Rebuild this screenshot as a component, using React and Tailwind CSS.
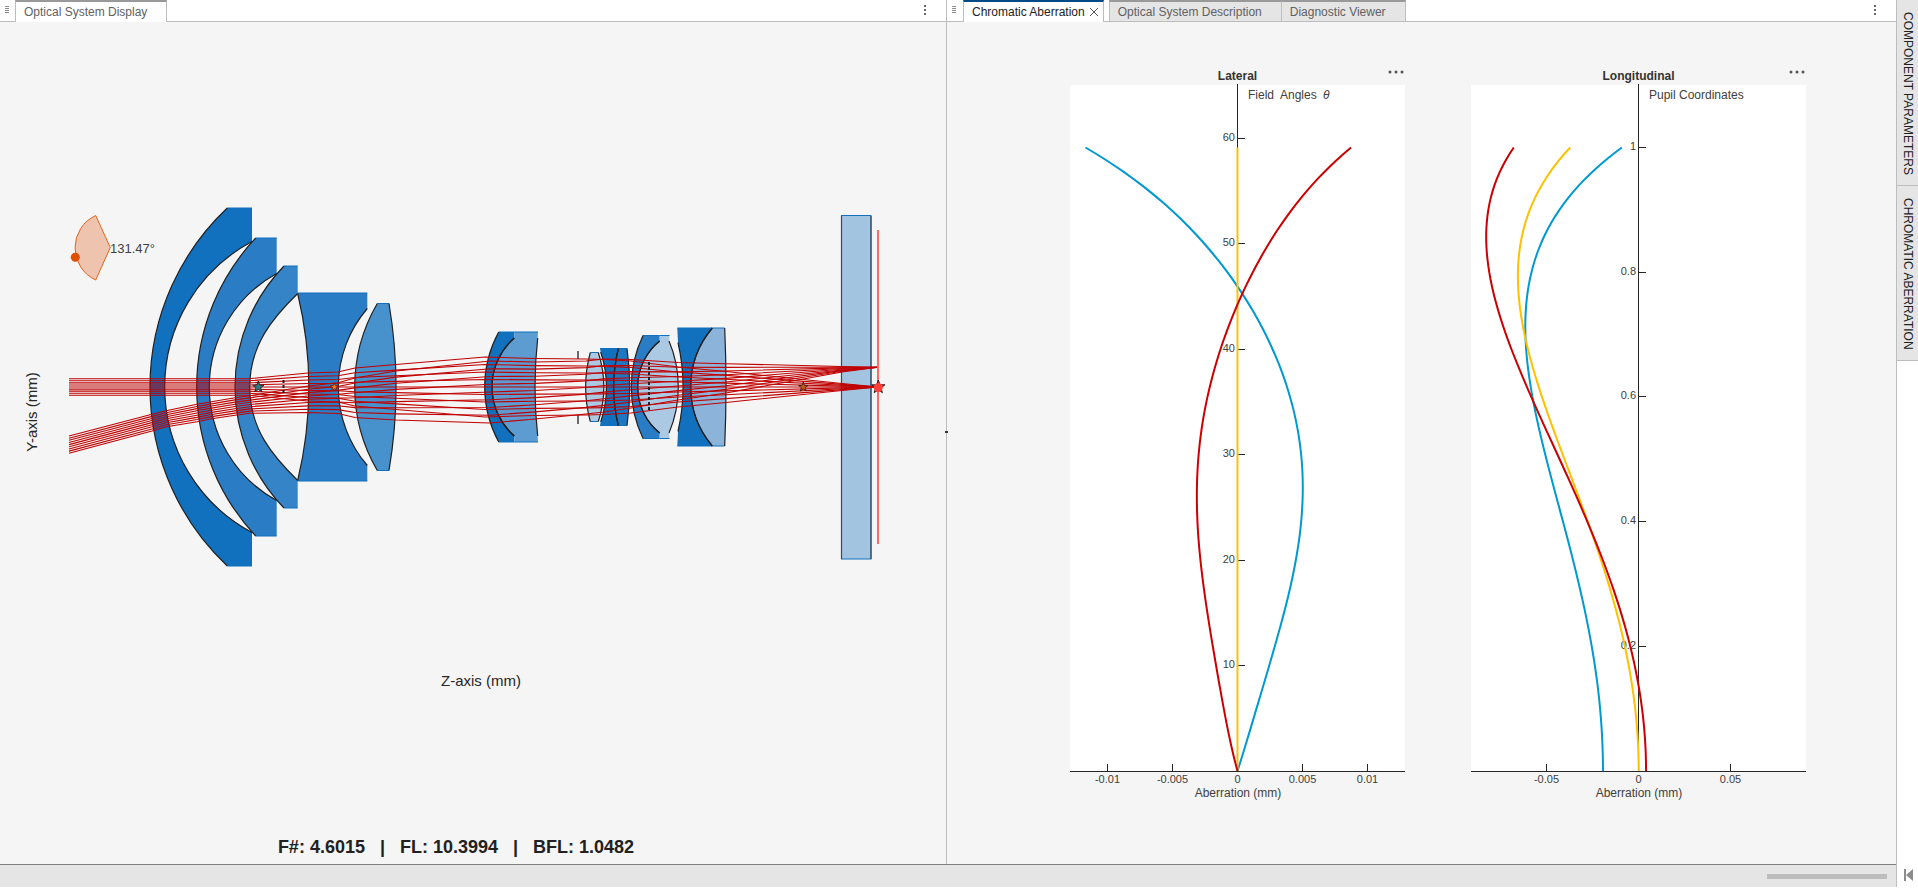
import React from 'react';

// optical axis of the lens drawing
const AXIS_Y = 387;

// A surface is [vertex x, edge x, half height]; xl/xr/h give the outer box of the element.
const LENSES = [
  { fill: '#1171be', left: [150, 227.3, 179], right: [164.7, 252, 145.5], xl: 227.3, xr: 252, h: 179 },
  { fill: '#2a7dc5', left: [196.7, 255.7, 149], right: [209.3, 276.7, 113.5], xl: 255.7, xr: 276.7, h: 149 },
  { fill: '#3584c7', left: [235, 284, 121], right: [249.7, 297.7, 93.5, 'asphere'], xl: 284, xr: 297.7, h: 121 },
  { fill: '#2a7dc5', left: [308.7, 297.7, 93.5], right: [338.3, 367.3, 78.5], xl: 297.7, xr: 367.3, h: 94 },
  { fill: '#4791cc', left: [354.7, 377.3, 83.5], right: [396, 389, 83.5], xl: 377.3, xr: 389, h: 83.5 },
  { fill: '#1171be', left: [484.7, 498.7, 55], right: [492, 514.3, 49], xl: 498.7, xr: 514.3, h: 55 },
  { fill: '#5d9cd1', left: [492, 514.3, 49], right: [535, 537.7, 49], xl: 514.3, xr: 538, h: 55 },
  { fill: '#abc9e3', left: [585.7, 590.3, 34.5], right: [603.7, 598.3, 34.5], xl: 590.3, xr: 598.3, h: 34.5 },
  { fill: '#1171be', left: [606.3, 600.7, 35], right: [613.7, 618.3, 38.5], xl: 600, xr: 618.3, h: 38.5 },
  { fill: '#1f77c2', left: [613.7, 618.3, 38.5], right: [629.7, 627, 38.5], xl: 618.3, xr: 627.3, h: 38.5 },
  { fill: '#2a7dc5', left: [631.3, 643, 51.5], right: [637.7, 659.7, 46], xl: 643, xr: 659.7, h: 51.5 },
  { fill: '#abc9e3', left: [637.7, 659.7, 46], right: [678.3, 669, 46], xl: 659.7, xr: 669.5, h: 51.5 },
  { fill: '#1171be', left: [683, 678, 44.5], right: [690.7, 712.3, 59], xl: 677.3, xr: 712.3, h: 59 },
  { fill: '#8cb4da', left: [690.7, 712.3, 59], right: [726, 724.7, 59], xl: 712.3, xr: 724.7, h: 59 },
];

// top and bottom ray of each bundle at every surface: [x, y top, y bottom]
const BUNDLES = [
  [
    [69, 378.7, 395.3], [249, 378.7, 395.3], [308, 373, 401], [338, 372, 402], [355, 368, 406],
    [396, 364.5, 409.5], [485, 357, 417], [535, 358.5, 415.5], [586, 359, 415], [604, 359.5, 414.5],
    [631, 361, 413], [678, 367, 407], [726, 371.5, 402.5], [842, 383.5, 390.5], [878, 387, 387],
  ],
  [
    [69, 436, 453.3], [152, 414.3, 431], [165, 411, 427], [197, 404.3, 421.7], [210, 402, 419],
    [235, 397.7, 415.3], [250, 395.7, 413.3], [308, 386, 412.5], [338, 382.7, 413.5], [355, 378, 417.5],
    [396, 371, 420], [490, 361, 423], [535, 362, 419], [586, 361, 414], [604, 359, 412],
    [631, 359.5, 408], [678, 362.5, 400], [726, 363.7, 393], [842, 366.5, 372], [878, 367.3, 367.3],
  ],
];
const RAYS_PER_BUNDLE = 9;

const TICK = '#262626';
const RED = '#cc0000';
const BLUE = '#0099d1';
const YELLOW = '#ffc000';

// plot rows of full field / full pupil and of zero
const CURVE_TOP = 63.5;
const CURVE_BOTTOM = 687;

// `powers` are the terms of the polynomial that is fitted through the samples
const CHARTS = [
  {
    title: 'Lateral',
    yLabel: 'Field  Angles ',
    symbol: 'θ',
    base: 167.5,
    powers: [1, 2, 3, 4, 5, 6],
    xTicks: [[37.5, '-0.01'], [102.5, '-0.005'], [167.5, '0'], [232.5, '0.005'], [297.5, '0.01']],
    yTicks: [[54.5, '60'], [159.5, '50'], [265.5, '40'], [370.5, '30'], [476.5, '20'], [581.5, '10']],
    lines: [
      { color: BLUE, points: [[15.7, 63.5], [51, 86.5], [86.7, 112.7], [126.7, 151], [167.5, 203.7], [203.3, 266], [223.3, 324.3], [231.7, 376], [232.7, 402], [226, 472.7], [206.7, 557.7], [186.7, 622.7], [167.5, 687]] },
      { color: YELLOW, points: [[167.5, 63.5], [167.5, 687]] },
      { color: RED, points: [[281, 63.5], [235, 109.3], [211.7, 139.3], [190, 176], [171.7, 209.3], [151.7, 262.7], [136.7, 317], [128, 376], [126.7, 409], [130, 469.3], [140, 546], [150.7, 607.7], [167.5, 687]] },
    ],
  },
  {
    title: 'Longitudinal',
    yLabel: 'Pupil Coordinates',
    base: 0,
    powers: [0, 2, 4, 6, 8],
    xTicks: [[75.5, '-0.05'], [167.5, '0'], [259.5, '0.05']],
    yTicks: [[63.5, '1'], [188.5, '0.8'], [312.5, '0.6'], [437.5, '0.4'], [562.5, '0.2']],
    lines: [
      { color: BLUE, points: [[150.3, 63.7], [122.3, 87.7], [92.3, 119.3], [72.3, 154.3], [59.7, 192.7], [54.3, 239.3], [57.3, 286], [64.5, 329.3], [75.7, 376], [86, 416], [99, 464.3], [112.3, 519.3], [122.3, 569.3], [128.5, 619.3], [131.3, 656], [131.7, 687]] },
      { color: YELLOW, points: [[99, 63.7], [69, 104.3], [52.3, 146], [47, 189.3], [53.7, 252.7], [70.7, 311], [94.3, 376], [108, 416], [116, 437.3], [129, 471], [142.3, 516], [153, 557.7], [160.7, 599.3], [165.7, 639.3], [167.5, 687]] },
      { color: RED, points: [[42.7, 63.7], [22.3, 104.3], [15.3, 152.7], [21.7, 206], [37.3, 256], [60.7, 314.3], [89, 376], [106, 416], [116.7, 437.3], [132.3, 476], [149, 524.3], [159, 562.7], [167.7, 602.7], [172.7, 639.3], [175, 687]] },
    ],
  },
];

function arcTo([vertex, edge, half, kind], down) {
  const end = AXIS_Y + (down ? half : -half);
  if (kind === 'asphere') {
    const s = down ? -1 : 1;
    const cx = edge - (edge - vertex) * 0.52;
    return `C ${cx} ${AXIS_Y + s * half * 0.74} ${vertex} ${AXIS_Y + s * half * 0.45} ${vertex} ${AXIS_Y}
      C ${vertex} ${AXIS_Y - s * half * 0.45} ${cx} ${AXIS_Y - s * half * 0.74} ${edge} ${end}`;
  }
  const sag = Math.abs(edge - vertex);
  const r = (half * half + sag * sag) / (2 * sag);
  const sweep = vertex < edge === down ? 0 : 1;
  return `A ${r} ${r} 0 0 ${sweep} ${edge} ${end}`;
}

function surfacePath(surface) {
  return `M ${surface[1]} ${AXIS_Y - surface[2]} ${arcTo(surface, true)}`;
}

function lensPath({ left, right, xl, xr, h }) {
  return `${surfacePath(left)} L ${xl} ${AXIS_Y + h} L ${xr} ${AXIS_Y + h}
    L ${right[1]} ${AXIS_Y + right[2]} ${arcTo(right, false)}
    L ${xr} ${AXIS_Y - h} L ${xl} ${AXIS_Y - h} Z`;
}

// Least squares by the normal equations, solved with Gauss-Jordan
function fitCoefficients(samples, powers) {
  const rows = powers.map((p) => [
    ...powers.map((q) => samples.reduce((sum, [t]) => sum + t ** (p + q), 0)),
    samples.reduce((sum, [t, x]) => sum + x * t ** p, 0),
  ]);
  const n = powers.length;
  for (let i = 0; i < n; i++) {
    let best = i;
    for (let k = i + 1; k < n; k++) {
      if (Math.abs(rows[k][i]) > Math.abs(rows[best][i])) best = k;
    }
    [rows[i], rows[best]] = [rows[best], rows[i]];
    const pivot = rows[i][i];
    rows[i] = rows[i].map((v) => v / pivot);
    for (let k = 0; k < n; k++) {
      if (k === i) continue;
      const f = rows[k][i];
      rows[k] = rows[k].map((v, j) => v - f * rows[i][j]);
    }
  }
  return rows.map((row) => row[n]);
}

function curvePath(points, powers, base) {
  if (points.length === 2) return `M ${points[0].join(' ')} L ${points[1].join(' ')}`;
  const span = CURVE_BOTTOM - CURVE_TOP;
  const samples = points.map(([x, y]) => [(CURVE_BOTTOM - y) / span, x - base]);
  const coefficients = fitCoefficients(samples, powers);
  const steps = 100;
  const out = [];
  for (let i = 0; i <= steps; i++) {
    const t = i / steps;
    const x = coefficients.reduce((sum, c, k) => sum + c * t ** powers[k], base);
    out.push(`${x.toFixed(2)} ${(CURVE_BOTTOM - t * span).toFixed(2)}`);
  }
  return `M ${out.join(' L ')}`;
}

function Star({ x, r, fill, stroke }) {
  const points = Array.from({ length: 10 }, (_, i) => {
    const a = -Math.PI / 2 + (i * Math.PI) / 5;
    const d = i % 2 ? r * 0.4 : r;
    return `${x + d * Math.cos(a)},${AXIS_Y + d * Math.sin(a)}`;
  }).join(' ');
  return <polygon points={points} fill={fill} stroke={stroke} strokeWidth="1" />;
}

function LensDrawing() {
  const rays = BUNDLES.flatMap((bundle) =>
    Array.from({ length: RAYS_PER_BUNDLE }, (_, i) => {
      const t = i / (RAYS_PER_BUNDLE - 1);
      return bundle.map(([x, top, bottom]) => `${x},${top + (bottom - top) * t}`).join(' ');
    })
  );

  return (
    <svg viewBox="0 22 946 802" className="w-full flex-1 min-h-0" role="img" aria-label="Optical system">
      <path d="M95.7 215.5 L110.3 247.5 L95.7 280 A35.5 35.5 0 0 1 95.7 215.5 Z" fill="#efc4ae" stroke="#de6420" />
      <circle cx="75.3" cy="257.3" r="4.5" fill="#de5000" />
      <text x="110" y="253" fontSize="13" fill="#404040">131.47°</text>

      {LENSES.map((lens, i) => (
        <g key={i}>
          <path d={lensPath(lens)} fill={lens.fill} />
          <path
            d={`M${lens.xl} ${AXIS_Y - lens.h} H${lens.xr} M${lens.xl} ${AXIS_Y + lens.h} H${lens.xr}`}
            stroke="#1171be"
          />
        </g>
      ))}
      {LENSES.map((lens, i) => (
        <path key={i} d={`${surfacePath(lens.left)} ${surfacePath(lens.right)}`} fill="none" stroke="#212121" strokeWidth="1.2" />
      ))}

      <rect x="841.5" y="215.5" width="29.5" height="343.5" fill="#a3c4e1" stroke="#1171be" />
      <path d="M841.5 216 V559 M871 216 V559" stroke="#3c4a57" strokeWidth="1.2" />
      <path d="M578 351 V359 M578 415 V424" stroke="#212121" strokeWidth="1.3" />

      {rays.map((points, i) => (
        <polyline key={i} points={points} fill="none" stroke="#c00000" strokeWidth="1.1" />
      ))}

      <path d="M649 362 V412" stroke="#212121" strokeWidth="2" strokeDasharray="3 2" />
      <path d="M283.5 380 V394" stroke="#212121" strokeWidth="2" strokeDasharray="3 2" />
      <Star x={258.3} r={6} fill="#2a7d8a" stroke="#3a2020" />
      <Star x={334.3} r={4.5} fill="#f08000" stroke="#7a2020" />
      <Star x={803.3} r={5} fill="#c85a14" stroke="#502010" />
      <path d="M878 230 V544" stroke="#ff6a64" strokeWidth="2" />
      <Star x={878.3} r={7} fill="#ff4038" stroke="#212121" />
      <circle cx="878.3" cy="387.5" r="4.5" fill="#ff4038" />

      <text x="481" y="686" fontSize="15" fill="#262626" textAnchor="middle">Z-axis (mm)</text>
      <text transform="translate(37 412) rotate(-90)" fontSize="15" fill="#262626" textAnchor="middle">Y-axis (mm)</text>
    </svg>
  );
}

function AberrationChart({ title, yLabel, symbol, base, powers, xTicks, yTicks, lines }) {
  return (
    <section>
      <div className="grid grid-cols-[1fr_auto_1fr] items-center h-4 text-xs text-[#333]">
        <h2 className="col-start-2 font-bold">{title}</h2>
        <button className="justify-self-end pb-2" aria-label={`${title} options`}>
          <svg width="18" height="4" fill="#555">
            <circle cx="3" cy="2" r="1.5" />
            <circle cx="9" cy="2" r="1.5" />
            <circle cx="15" cy="2" r="1.5" />
          </svg>
        </button>
      </div>
      <svg viewBox="0 0 335 720" className="block w-full" role="img" aria-label={`${title} chromatic aberration`}>
        <rect x="0" y="1" width="335" height="686" fill="#fff" />
        <path d="M0 687.5 H335 M167.5 0 V687" stroke={TICK} fill="none" />
        {xTicks.map(([x, label]) => (
          <g key={label}>
            <path d={`M${x} 687 v-7`} stroke={TICK} />
            <text x={x} y="699" fontSize="11" fill="#404040" textAnchor="middle">{label}</text>
          </g>
        ))}
        {yTicks.map(([y, label]) => (
          <g key={label}>
            <path d={`M168 ${y} h7`} stroke={TICK} />
            <text x="165" y={y + 2.5} fontSize="11" fill="#404040" textAnchor="end">{label}</text>
          </g>
        ))}
        <text x="178" y="15" fontSize="12" fill="#404040" className="whitespace-pre">
          {yLabel}
          {symbol && <tspan dx="3" fontStyle="italic">{symbol}</tspan>}
        </text>
        <text x="168" y="713" fontSize="12" fill="#404040" textAnchor="middle">Aberration (mm)</text>
        {lines.map((line) => (
          <path key={line.color} d={curvePath(line.points, powers, base)} fill="none" stroke={line.color} strokeWidth="2" />
        ))}
      </svg>
    </section>
  );
}

function Grip() {
  return (
    <svg width="4" height="8" className="mx-[5px] mt-[6px] shrink-0" aria-hidden="true">
      <path d="M0 .5 H4 M0 2.5 H4 M0 4.5 H4 M0 6.5 H4" stroke="#8c8c8c" />
    </svg>
  );
}

function Kebab({ label }) {
  return (
    <button className="ml-auto mr-5 flex items-center pb-0.5" aria-label={label}>
      <svg width="2" height="10" fill="#666">
        <rect width="2" height="2" />
        <rect y="4" width="2" height="2" />
        <rect y="8" width="2" height="2" />
      </svg>
    </button>
  );
}

function TabBar({ children, label }) {
  return (
    <div className="flex h-[22px] shrink-0 bg-white text-xs leading-4 shadow-[inset_0_-1px_0_#bdbdbd]">
      <Grip />
      {children}
      <Kebab label={label} />
    </div>
  );
}

export default function App() {
  return (
    <div className="flex h-screen min-h-[600px] bg-white pb-0.5 font-['Liberation_Sans',Arial,sans-serif] text-[#212121]">
      <div className="flex flex-1 min-w-0 flex-col">
        <div className="flex flex-1 min-h-0 bg-[#f5f5f5]">
          <div className="flex flex-[946] min-w-0 flex-col">
            <TabBar label="Display options">
              <button className="ml-px border-x border-t-2 border-x-[#bdbdbd] border-t-[#999] bg-white pl-2 pr-[19px] text-[#616161]">
                Optical System Display
              </button>
            </TabBar>
            <LensDrawing />
            <p className="h-10 shrink-0 whitespace-pre pt-[9px] pr-[34px] text-center text-lg font-bold">
              F#: 4.6015   |   FL: 10.3994   |   BFL: 1.0482
            </p>
          </div>

          <div className="flex w-px shrink-0 items-center justify-center bg-[#bdbdbd]">
            <span className="h-[2px] w-[3px] shrink-0 bg-[#333]" />
          </div>

          <div className="flex flex-[949] min-w-0 flex-col">
            <TabBar label="Chart options">
              <button className="ml-0.5 border-x border-t-2 border-x-[#bdbdbd] border-t-[#004b87] bg-white pl-2 pr-1 flex items-center gap-1 text-[#212121]">
                Chromatic Aberration
                <svg width="10" height="10" viewBox="0 0 10 10" aria-hidden="true">
                  <path d="M1 1 L9 9 M9 1 L1 9" stroke="#555" />
                </svg>
              </button>
              <button className="ml-[5px] border-l border-b border-t-2 border-x-[#bdbdbd] border-b-[#bdbdbd] border-t-[#999] bg-[#e5e5e5] pl-2 pr-[19px] text-[#616161]">
                Optical System Description
              </button>
              <button className="border-x border-b border-t-2 border-x-[#bdbdbd] border-b-[#bdbdbd] border-t-[#999] bg-[#e5e5e5] pl-2 pr-[19px] text-[#616161]">
                Diagnostic Viewer
              </button>
            </TabBar>
            <main className="grid flex-1 min-h-0 grid-cols-2 content-start gap-[66px] pl-[123px] pr-[90px] pt-[46px]">
              {CHARTS.map((chart) => (
                <AberrationChart key={chart.title} {...chart} />
              ))}
            </main>
          </div>
        </div>

        <footer className="flex h-[23px] shrink-0 items-center justify-end border-t border-[#808080] bg-[#e5e5e5] pr-[9px]">
          <div className="h-[5px] w-[120px] bg-[#bdbdbd]" />
        </footer>
      </div>

      <nav className="flex w-[22px] shrink-0 flex-col border-l border-[#bdbdbd] text-xs leading-[18px]">
        <button className="border-b border-[#bdbdbd] bg-[#e5e5e5] pt-3 pb-2.5 [writing-mode:vertical-rl]">
          COMPONENT PARAMETERS
        </button>
        <button className="border-b border-[#bdbdbd] bg-[#e5e5e5] pt-3 pb-2.5 [writing-mode:vertical-rl]">
          CHROMATIC ABERRATION
        </button>
        <button className="mx-auto mt-auto mb-1.5 pl-0.5" aria-label="Expand side panel">
          <svg width="10" height="12" fill="#8c8c8c">
            <path d="M0 0 h2 v12 h-2 Z M9 0 v12 L2 6 Z" />
          </svg>
        </button>
      </nav>
    </div>
  );
}
